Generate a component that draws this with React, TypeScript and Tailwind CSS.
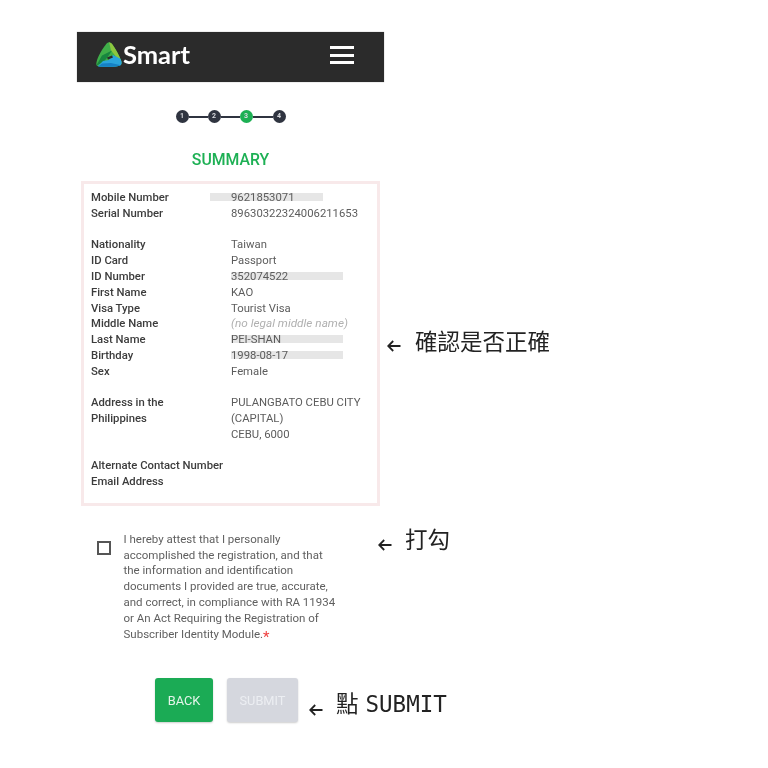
import React from 'react';

const ROBOTO = 'font-["Roboto","Liberation_Sans",sans-serif]';

const SmartLogo: React.FC = () => (
  <svg width="26" height="26" viewBox="0 0 26 26" className="shrink-0">
    <defs>
      <clipPath id="smart-mark">
        <path d="M13 0.3 C14.5 0.3 15.5 1.2 16.8 3 C20 7.5 23.5 13.5 25.3 19 C26.2 22 25.3 23.4 22.5 23.9 C16.5 25 9.5 25 3.5 24.6 C0.8 24.4 -0.2 23 0.5 20.2 C2 14 6 7.5 9.5 3 C10.8 1.2 11.7 0.3 13 0.3 Z" />
      </clipPath>
    </defs>
    <g clipPath="url(#smart-mark)">
      <rect width="26" height="26" fill="#3fae49" />
      <path d="M13 0 L18 2 L26 20 L19.5 14 L15 8.5 Z" fill="#8cc63f" />
      <path d="M0 24 L6 13.5 L16 8.5 L12 14.5 L8 19.5 Z" fill="#17863f" />
      <path d="M17 13 L26 17.5 L26 26 L0 26 L7 19 L13 18 Z" fill="#2aa4dc" />
      <path d="M0 26 L6 21.5 L15 21 L26 23.5 L26 26 Z" fill="#1580c4" />
      <path d="M11 15.5 L16 13.5 L17 15.5 L12 17.5 Z" fill="#2b2b2b" />
    </g>
  </svg>
);

const Step: React.FC<{ n: number; active?: boolean }> = ({ n, active }) => (
  <div
    className={`flex h-[13px] w-[13px] shrink-0 items-center justify-center rounded-full text-[7px] font-bold text-[#d8dade] ${ROBOTO} ${active ? 'bg-[#1db054]' : 'bg-[#2f3440]'}`}
  >
    {n}
  </div>
);

const Row: React.FC<{ label: React.ReactNode; value?: React.ReactNode; bar?: string; italic?: boolean }> = ({
  label,
  value,
  bar,
  italic,
}) => (
  <div className="grid grid-cols-[140px_1fr]">
    <div className="font-medium text-[#3c3c3c]">{label}</div>
    <div className={`relative ${italic ? 'text-[11.8px] italic text-[#b0b0b0]' : 'text-[#5c5c5c]'}`}>
      {bar && <span className={`absolute top-[3px] h-[8px] bg-[#e6e6e6] ${bar}`} />}
      <span className="relative">{value}</span>
    </div>
  </div>
);

const Note: React.FC<{ children: React.ReactNode; gap: string; arrow?: string }> = ({ children, gap, arrow = 'mt-[10px]' }) => (
  <div className={`flex items-center whitespace-nowrap text-[22.5px] leading-[30px] text-[#222] ${gap} font-["DejaVu_Sans_Mono","Noto_Sans_CJK_TC",monospace]`}>
    <svg width="14" height="12" viewBox="0 0 14 12" className={`shrink-0 ${arrow}`} fill="none" stroke="#222" strokeWidth="1.8">
      <path d="M13.5 6 H1.2 M6.2 1 L1.2 6 L6.2 11" />
    </svg>
    <span>{children}</span>
  </div>
);

export default function App() {
  return (
    <div className={`min-h-[768px] w-[768px] bg-white pl-[77px] pt-8 ${ROBOTO} blur-[0.4px]`}>
      <header className="flex h-[50px] w-[307px] items-center justify-between bg-[#2b2b2b] pb-[4px] pl-[19px] pr-[30px] shadow-[0_0_1px_#999]">
        <div className="flex items-center gap-[1px]">
          <SmartLogo />
          <span className='text-[25.5px] font-bold leading-none text-white font-["Lato",sans-serif]'>Smart</span>
        </div>
        <div className="flex w-[24px] flex-col gap-[4.3px]">
          <span className="h-[3px] bg-white" />
          <span className="h-[3px] bg-white" />
          <span className="h-[3px] bg-white" />
        </div>
      </header>

      <div className="mt-[28px] flex w-[307px] items-center justify-center">
        <Step n={1} />
        <span className="h-[2px] w-[19px] bg-[#2f3440]" />
        <Step n={2} />
        <span className="h-[2px] w-[19px] bg-[#2f3440]" />
        <Step n={3} active />
        <span className="h-[2px] w-[20px] bg-[#2f3440]" />
        <Step n={4} />
      </div>

      <h1 className="mt-[27px] w-[307px] text-center text-[15.8px] font-medium leading-[20px] text-[#1db054]">SUMMARY</h1>

      <div className="mt-[11px] flex items-center">
        <div className="ml-[4px] w-[299px] shrink-0 border-[3px] border-[#f8e9ea] px-[7px] pb-[13px] pt-[6px] text-[11.3px] leading-[15.8px]">
          <Row label="Mobile Number" value="9621853071" bar="-left-[21px] w-[113px]" />
          <Row label="Serial Number" value="89630322324006211653" />
          <div className="h-[15.8px]" />
          <Row label="Nationality" value="Taiwan" />
          <Row label="ID Card" value="Passport" />
          <Row label="ID Number" value="352074522" bar="left-0 w-[112px]" />
          <Row label="First Name" value="KAO" />
          <Row label="Visa Type" value="Tourist Visa" />
          <Row label="Middle Name" value="(no legal middle name)" italic />
          <Row label="Last Name" value="PEI-SHAN" bar="left-0 w-[112px]" />
          <Row label="Birthday" value="1998-08-17" bar="left-0 w-[112px]" />
          <Row label="Sex" value="Female" />
          <div className="h-[15.8px]" />
          <Row
            label={<>Address in the<br />Philippines</>}
            value={<>PULANGBATO CEBU CITY<br />(CAPITAL)<br />CEBU, 6000</>}
          />
          <div className="h-[15px]" />
          <div className="font-medium text-[#3c3c3c]">Alternate Contact Number</div>
          <div className="mt-[0.5px] font-medium text-[#3c3c3c]">Email Address</div>
        </div>
        <div className="-mt-[2px] ml-[7px]">
          <Note gap="gap-[14px]" arrow="mt-[8px]">確認是否正確</Note>
        </div>
      </div>

      <div className="mt-[26px] flex items-start">
        <div className="flex w-[302px] shrink-0 items-start pl-[20px]">
          <span className="mt-[9px] h-[14px] w-[14px] shrink-0 border-2 border-[#555]" />
          <p className="ml-[12.5px] text-[11.5px] leading-[15.8px] text-[#5f5f5f]">
            I hereby attest that I personally<br />
            accomplished the registration, and that<br />
            the information and identification<br />
            documents I provided are true, accurate,<br />
            and correct, in compliance with RA 11934<br />
            or An Act Requiring the Registration of<br />
            Subscriber Identity Module.
            <span className="relative top-[4px] text-[15px] leading-[0] text-[#f04040]">*</span>
          </p>
        </div>
        <div className="-mt-[7px] -ml-px">
          <Note gap="gap-[13px]">打勾</Note>
        </div>
      </div>

      <div className="mt-[36px] flex items-center pl-[78px]">
        <button className="h-[44px] w-[58px] rounded-[3px] bg-[#1bab55] text-[12.8px] text-[#e4f4ea] shadow-[0_1px_2px_rgba(0,0,0,0.2)]">BACK</button>
        <button className="ml-[14px] h-[44px] w-[71px] rounded-[3px] bg-[#d5d7de] text-[12.8px] text-[#eceef2] shadow-[0_1px_2px_rgba(0,0,0,0.2)]">SUBMIT</button>
        <div className="ml-[11px] mt-[8px]">
          <Note gap="gap-[13px]" arrow="mt-[12px]">點<span className="ml-[7px]">SUBMIT</span></Note>
        </div>
      </div>
    </div>
  );
}
